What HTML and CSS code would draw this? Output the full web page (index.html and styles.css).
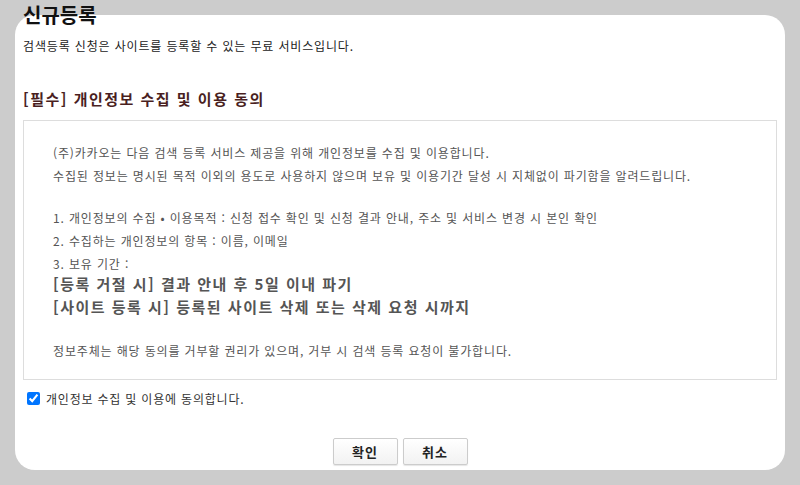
FILE: index.html
```html
<!DOCTYPE html>
<html lang="ko">
<head>
    <meta charset="UTF-8">
    <meta name="viewport" content="width=device-width, initial-scale=1.0">
    <title>신규등록</title>
    <link rel="stylesheet" href="styles.css">
</head>
<body>
    <div class="panel">
        <h1 class="title">신규등록</h1>
        <p class="desc">검색등록 신청은 사이트를 등록할 수 있는 무료 서비스입니다.</p>

        <h2 class="section">[필수] 개인정보 수집 및 이용 동의</h2>
        <div class="terms">
            <p>(주)카카오는 다음 검색 등록 서비스 제공을 위해 개인정보를 수집 및 이용합니다.<br>
            수집된 정보는 명시된 목적 이외의 용도로 사용하지 않으며 보유 및 이용기간 달성 시 지체없이 파기함을 알려드립니다.</p>
            <p>1. 개인정보의 수집 • 이용목적 : 신청 접수 확인 및 신청 결과 안내, 주소 및 서비스 변경 시 본인 확인<br>
            2. 수집하는 개인정보의 항목 : 이름, 이메일<br>
            3. 보유 기간 :</p>
            <p class="period">[등록 거절 시] 결과 안내 후 5일 이내 파기<br>
            [사이트 등록 시] 등록된 사이트 삭제 또는 삭제 요청 시까지</p>
            <p>정보주체는 해당 동의를 거부할 권리가 있으며, 거부 시 검색 등록 요청이 불가합니다.</p>
        </div>

        <label class="agree"><input type="checkbox" checked> 개인정보 수집 및 이용에 동의합니다.</label>

        <div class="buttons">
            <button>확인</button>
            <button>취소</button>
        </div>
    </div>
</body>
</html>
```

FILE: styles.css
```css
body {
    font-family: 'Noto Sans CJK KR', 'Noto Sans', sans-serif;
    background-color: #cccccc;
    margin: 0;
    padding: 15px;
    color: #222;
}

.panel {
    background-color: #fff;
    border-radius: 20px;
    height: 455px;
    padding: 0 8px;
    box-sizing: border-box;
}

.title {
    font-size: 20px;
    font-weight: bold;
    margin: 0;
    position: relative;
    top: -13px;
    line-height: 26px;
    height: 13px;
    color: #111;
}

.desc {
    font-size: 12px;
    margin: 9px 0 0;
    line-height: 18px;
    letter-spacing: 0.85px;
}

.section {
    font-size: 15px;
    font-weight: bold;
    color: #4a1f1f;
    letter-spacing: 1.5px;
    margin: 33px 0 0;
    line-height: 22px;
}

.terms {
    border: 1px solid #dddddd;
    margin-top: 10px;
    height: 260px;
    box-sizing: border-box;
    padding: 20px 29px;
    font-size: 12px;
    color: #555;
    line-height: 23px;
    letter-spacing: 0.85px;
}

.terms p {
    margin: 0 0 19px;
}

.terms .period {
    font-size: 15px;
    font-weight: bold;
    line-height: 23px;
    letter-spacing: 1.5px;
    margin: -22px 0 21px;
}

.agree {
    display: flex;
    align-items: center;
    gap: 6px;
    font-size: 12px;
    color: #333;
    letter-spacing: 0.8px;
    margin: 10px 0 0 4px;
}

.agree input {
    margin: 0;
    width: 13px;
    height: 13px;
}

.buttons {
    display: flex;
    justify-content: center;
    gap: 5px;
    margin-top: 31px;
}

button {
    font-family: inherit;
    font-size: 13px;
    font-weight: bold;
    letter-spacing: 1px;
    width: 65px;
    height: 27px;
    background: linear-gradient(#fff, #f2f2f2);
    border: 1px solid #ccc;
    border-radius: 2px;
    color: #222;
    box-shadow: 0 1px 1px rgba(0, 0, 0, 0.1);
}
```
